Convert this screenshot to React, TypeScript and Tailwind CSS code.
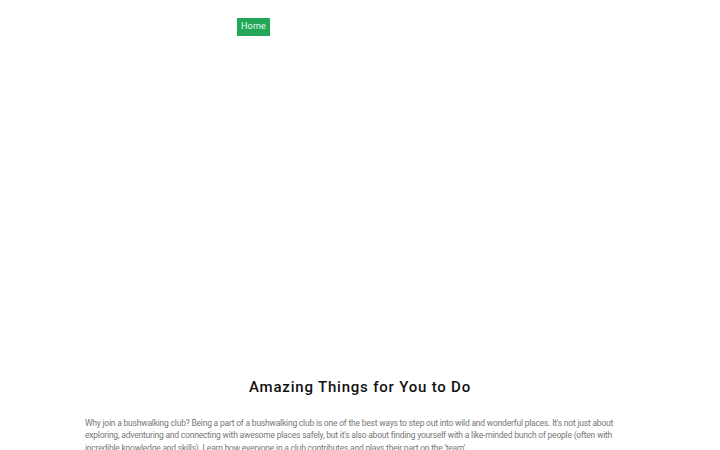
import React from 'react';

export default function App() {
  return (
    <div className="min-h-screen bg-white" style={{ fontFamily: 'Roboto, "Liberation Sans", sans-serif' }}>
      {/* Top nav */}
      <nav className="flex h-[54px] items-start pl-[237px] pt-[18px]">
        <a className="flex h-[18px] items-center bg-[#22a658] px-[4px] text-[9px] tracking-[0.2px] text-[#eafff0]">
          Home
        </a>
      </nav>

      {/* Hero area (empty) */}
      <div className="h-[322px]" />

      <section className="flex flex-col items-center">
        <h2 className="text-[15px] font-medium tracking-[0.8px] text-[#111]">Amazing Things for You to Do</h2>
        <p className="mt-[18px] w-[550px] text-[8.5px] leading-[12.6px] tracking-[-0.21px] text-[#777]">
          Why join a bushwalking club? Being a part of a bushwalking club is one of the best ways to step out into wild and wonderful places. It&apos;s not just about exploring, adventuring and connecting with awesome places safely, but it&apos;s also about finding yourself with a like-minded bunch of people (often with incredible knowledge and skills). Learn how everyone in a club contributes and plays their part on the &apos;team&apos;.
        </p>
      </section>
    </div>
  );
}
